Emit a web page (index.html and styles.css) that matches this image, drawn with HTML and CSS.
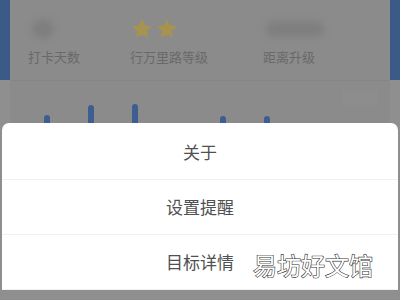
FILE: index.html
```html
<!DOCTYPE html>
<html lang="zh-CN">
<head>
  <meta charset="UTF-8">
  <title>行万里路</title>
  <meta name="viewport" content="width=device-width, initial-scale=1.0">
  <link rel="stylesheet" href="styles.css">
</head>
<body>
  <div class="page">
    <div class="header">
      <div class="strip"></div>
      <div class="card">
        <div class="stats">
          <div class="stat">
            <div class="value"><span class="blur blur-round"></span></div>
            <div class="label">打卡天数</div>
          </div>
          <div class="stat">
            <div class="value stars">
              <svg class="star" viewBox="0 0 20 20"><path d="M10 1l2.7 5.7 6.3.8-4.6 4.3 1.2 6.2L10 15l-5.6 3 1.2-6.2L1 7.5l6.3-.8z"/></svg>
              <svg class="star" viewBox="0 0 20 20"><path d="M10 1l2.7 5.7 6.3.8-4.6 4.3 1.2 6.2L10 15l-5.6 3 1.2-6.2L1 7.5l6.3-.8z"/></svg>
            </div>
            <div class="label">行万里路等级</div>
          </div>
          <div class="stat">
            <div class="value"><span class="blur blur-wide"></span></div>
            <div class="label">距离升级</div>
          </div>
        </div>
      </div>
      <div class="strip"></div>
    </div>

    <div class="chart">
      <div class="bars">
        <span class="bar" style="height: 8px"></span>
        <span class="bar" style="height: 18px"></span>
        <span class="bar" style="height: 19px"></span>
        <span class="bar" style="height: 0"></span>
        <span class="bar" style="height: 7px"></span>
        <span class="bar" style="height: 7px"></span>
      </div>
      <div class="legend"></div>
    </div>

    <div class="sheet">
      <div class="item">关于</div>
      <div class="item">设置提醒</div>
      <div class="item">目标详情</div>
    </div>
  </div>

  <div class="watermark">易坊好文馆</div>
</body>
</html>
```

FILE: styles.css
```css
body {
  margin: 0;
  font-family: "Noto Sans CJK SC", "Liberation Sans", sans-serif;
  background-color: #8b8b8b;
}

.page {
  width: 400px;
  height: 300px;
  overflow: hidden;
  background-color: #8f8f8f;
}

.header {
  display: flex;
  height: 80px;
}

.strip {
  width: 10px;
  background-color: #3b5a88;
}

.card {
  flex: 1;
  background-color: #8b8b8b;
}

.stats {
  display: grid;
  grid-template-columns: 102px 133px 1fr;
  padding: 16px 0 0 18px;
}

.value {
  height: 26px;
  display: flex;
  align-items: center;
}

.stars {
  gap: 3px;
  padding-left: 1px;
}

.star {
  width: 22px;
  height: 22px;
  fill: #a6934f;
}

.blur {
  display: block;
  background-color: #7f7f7f;
  filter: blur(3px);
}

.blur-round {
  width: 22px;
  height: 20px;
  margin-left: 4px;
  border-radius: 50%;
}

.blur-wide {
  width: 58px;
  height: 16px;
  margin-left: 3px;
  border-radius: 8px;
}

.label {
  margin-top: 6px;
  font-size: 13px;
  color: #696969;
  line-height: 18px;
}

.chart {
  position: relative;
  height: 42px;
  margin: 0 10px;
  border-top: 1px solid #858585;
  background-color: #8b8b8b;
}

.bars {
  display: flex;
  align-items: flex-end;
  gap: 38px;
  height: 100%;
  padding-left: 34px;
}

.bar {
  width: 6px;
  background-color: #3e5e8f;
  border-radius: 3px 3px 0 0;
}

.legend {
  position: absolute;
  top: 10px;
  right: 12px;
  width: 36px;
  height: 14px;
  background-color: #8d8d8d;
}

.sheet {
  margin: 0 2px;
  background-color: #ffffff;
  border-radius: 7px 7px 0 0;
  padding-top: 2px;
}

.item {
  height: 54px;
  line-height: 54px;
  text-align: center;
  font-size: 17px;
  color: #505050;
  border-bottom: 1px solid #f1f1f1;
}

.watermark {
  position: absolute;
  left: 253px;
  top: 251px;
  font-size: 24px;
  line-height: 28px;
  color: #ffffff;
  font-family: "Noto Sans CJK SC", sans-serif;
  -webkit-text-stroke: 1.2px #333333;
  paint-order: stroke fill;
}
```
